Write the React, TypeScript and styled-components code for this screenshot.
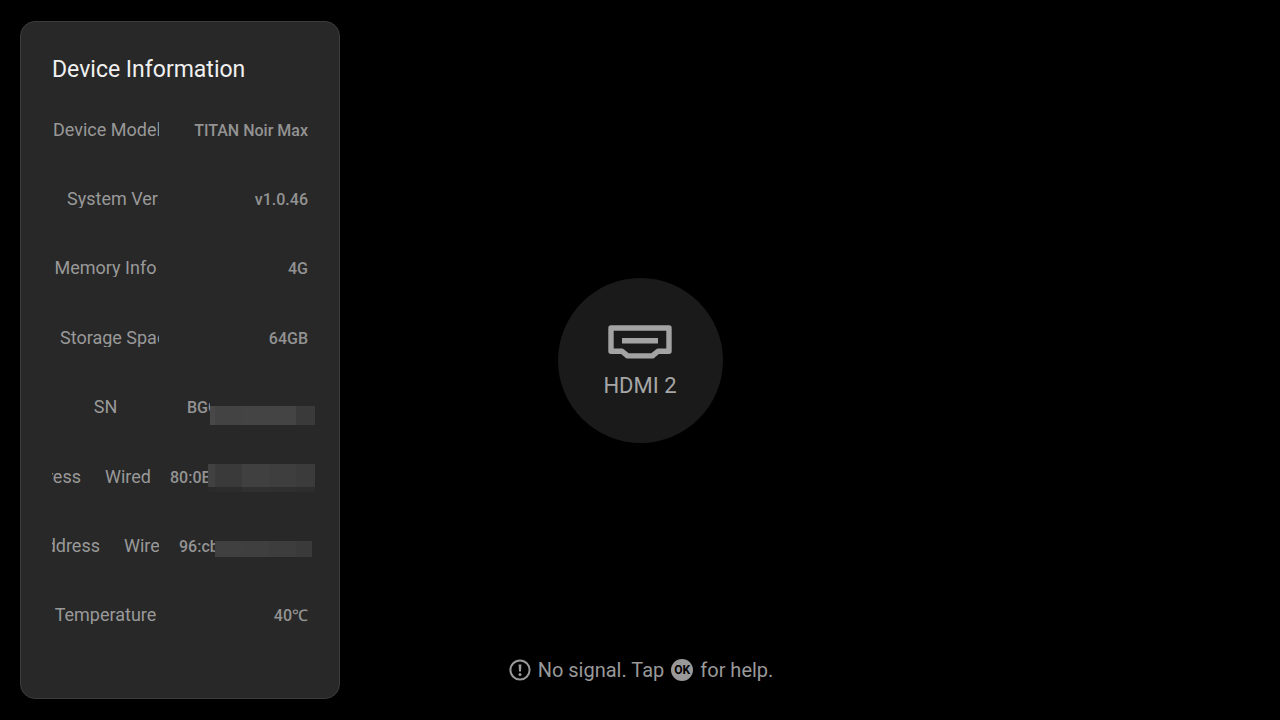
import React from "react";
import styled, { createGlobalStyle } from "styled-components";

const Global = createGlobalStyle`
  *, *::before, *::after { box-sizing: border-box; }
  body {
    margin: 0;
    background: #000;
    color: #999;
    font-family: Roboto, "Noto Sans", sans-serif;
  }
`;

const Page = styled.div`
  position: relative;
  min-height: 100vh;
  display: grid;
`;

const Screen = styled.main`
  display: grid;
  grid-template-rows: 1fr auto 1fr;
  justify-items: center;
`;

const Source = styled.section`
  grid-row: 2;
  width: 165px;
  height: 165px;
  padding-top: 3px;
  border-radius: 50%;
  background: #1a1a1a;
  display: flex;
  flex-direction: column;
  align-items: center;
  justify-content: center;
  gap: 15px;
`;

const SourceName = styled.h1`
  margin: 0;
  font-size: 22px;
  line-height: 24px;
  font-weight: 400;
  color: #a6a6a6;
`;

const Hint = styled.p`
  grid-row: 3;
  align-self: end;
  margin: 0;
  padding: 0 0 38px 2px;
  display: flex;
  align-items: center;
  gap: 7px;
  font-size: 20px;
  line-height: 24px;
`;

const Key = styled.kbd`
  width: 22px;
  height: 22px;
  border-radius: 50%;
  background: #999;
  color: #000;
  font-family: inherit;
  font-size: 12px;
  font-weight: 700;
  line-height: 22px;
  text-align: center;
`;

const Panel = styled.aside`
  position: absolute;
  inset: 21px auto 21px 20px;
  width: 320px;
  padding: 32px 31px 48px;
  border: 1px solid #3c3c3c;
  border-radius: 15px;
  background: #282828;
  display: flex;
  flex-direction: column;
`;

const PanelTitle = styled.h2`
  margin: 0 0 9px;
  font-size: 23px;
  line-height: 32px;
  font-weight: 400;
  color: #f0f0f0;
`;

const List = styled.dl`
  flex: 1;
  margin: 0;
  display: grid;
  grid-auto-rows: 1fr;
`;

const Row = styled.div`
  display: flex;
  align-items: center;
`;

const Label = styled.dt<{ $scrolling: boolean }>`
  flex: none;
  display: flex;
  justify-content: ${(p) => (p.$scrolling ? "flex-start" : "center")};
  gap: 24px;
  width: 107px;
  overflow: hidden;
  white-space: nowrap;
  font-size: 18px;
  line-height: 18px;
`;

const Leaving = styled.span`
  flex: none;
  display: flex;
  justify-content: flex-end;
  overflow: hidden;
`;

const Value = styled.dd`
  flex: 1;
  margin: 0;
  padding-top: 2px;
  display: flex;
  justify-content: flex-end;
  white-space: nowrap;
  font-size: 16px;
  line-height: 20px;
  font-weight: 500;
  color: #939393;
`;

const Masked = styled.span<{ $width: number }>`
  position: relative;
  width: ${(p) => p.$width}px;
`;

const Clip = styled.span<{ $width: number }>`
  display: block;
  width: ${(p) => p.$width}px;
  overflow: hidden;
`;

const Mosaic = styled.span<{ $top: number; $right: number }>`
  position: absolute;
  top: ${(p) => p.$top}px;
  right: ${(p) => p.$right}px;
  display: flex;
`;

const Tile = styled.span<{ $w: number; $h: number; $color: string; $fade?: string }>`
  width: ${(p) => p.$w}px;
  height: ${(p) => p.$h}px;
  background: ${(p) => p.$color};
  border-bottom: ${(p) => (p.$fade ? `5px solid ${p.$fade}` : "0")};
`;

type Mask = {
  width: number;
  visible: number;
  top: number;
  right: number;
  height: number;
  tiles: [number, string, string?][];
};

type Item = {
  label: string;
  offset?: number;
  leaving?: { text: string; width: number };
  value: string;
  mask?: Mask;
};

const items: Item[] = [
  { label: "Device Model", offset: 1, value: "TITAN Noir Max" },
  { label: "System Version", offset: 15, value: "v1.0.46" },
  { label: "Memory Info", value: "4G" },
  { label: "Storage Space", offset: 8, value: "64GB" },
  {
    label: "SN",
    value: "BGG",
    mask: {
      width: 121, visible: 23, top: 8, right: -7, height: 19,
      tiles: [[5, "#484848"], [27, "#434343"], [54, "#444444"], [19, "#3a3a3a"]],
    },
  },
  {
    label: "Wired",
    leaving: { text: "Address", width: 29 },
    value: "80:0B",
    mask: {
      width: 138, visible: 38, top: -4, right: -7, height: 28,
      tiles: [
        [7, "#414141", "#2a2a2a"],
        [27, "#3a3a3a", "#2c2c2c"],
        [27, "#404040", "#303030"],
        [27, "#3e3e3e", "#2f2f2f"],
        [19, "#3b3b3b", "#2d2d2d"],
      ],
    },
  },
  {
    label: "Wired",
    leaving: { text: "Address", width: 48 },
    value: "96:cb",
    mask: {
      width: 129, visible: 36, top: 4, right: -4, height: 16,
      tiles: [[27, "#404040"], [27, "#3f3f3f"], [27, "#3d3d3d"], [16, "#3a3a3a"]],
    },
  },
  { label: "Temperature", value: "40℃" },
];

function HdmiIcon() {
  return (
    <svg width="64" height="34" viewBox="0 0 64 34" fill="none" aria-hidden="true">
      <path
        d="M3 3H61V26.2H50L44.4 30.9H19.6L14 26.2H3Z"
        stroke="#a3a3a3"
        strokeWidth="5.4"
        strokeLinejoin="round"
      />
      <path d="M14 15.7H50" stroke="#a3a3a3" strokeWidth="5.4" />
    </svg>
  );
}

function AlertIcon() {
  return (
    <svg width="22" height="22" viewBox="0 0 22 22" fill="none" aria-hidden="true">
      <circle cx="11" cy="11" r="9.6" stroke="#999" strokeWidth="2" />
      <path d="M9.6 5.4h2.8l-.4 7.2h-2z" fill="#999" />
      <circle cx="11" cy="15.4" r="1.5" fill="#999" />
    </svg>
  );
}

function MaskedValue({ text, mask }: { text: string; mask: Mask }) {
  return (
    <Masked $width={mask.width}>
      <Clip $width={mask.visible}>{text}</Clip>
      <Mosaic $top={mask.top} $right={mask.right}>
        {mask.tiles.map(([w, color, fade], i) => (
          <Tile key={i} $w={w} $h={mask.height} $color={color} $fade={fade} />
        ))}
      </Mosaic>
    </Masked>
  );
}

function InfoRow({ item }: { item: Item }) {
  const { label, offset, leaving, value, mask } = item;
  return (
    <Row>
      <Label $scrolling={offset !== undefined || leaving !== undefined}>
        {leaving && <Leaving style={{ width: leaving.width }}>{leaving.text}</Leaving>}
        <span style={{ marginLeft: offset }}>{label}</span>
      </Label>
      <Value>{mask ? <MaskedValue text={value} mask={mask} /> : value}</Value>
    </Row>
  );
}

export default function App() {
  return (
    <>
      <Global />
      <Page>
        <Screen>
          <Source>
            <HdmiIcon />
            <SourceName>HDMI 2</SourceName>
          </Source>
          <Hint>
            <AlertIcon />
            <span>No signal. Tap</span>
            <Key>OK</Key>
            <span>for help.</span>
          </Hint>
        </Screen>
        <Panel>
          <PanelTitle>Device Information</PanelTitle>
          <List>
            {items.map((item, i) => (
              <InfoRow key={i} item={item} />
            ))}
          </List>
        </Panel>
      </Page>
    </>
  );
}
